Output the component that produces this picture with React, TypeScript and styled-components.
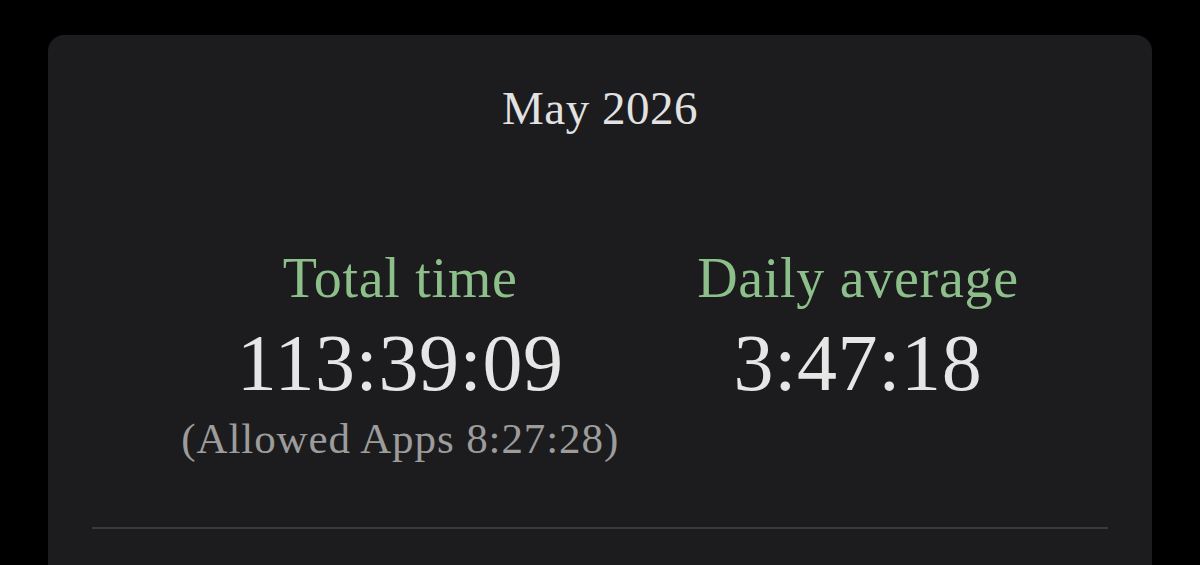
import React from "react";
import styled, { createGlobalStyle } from "styled-components";

const Global = createGlobalStyle`
  html, body { margin: 0; padding: 0; background: #000; }
  body { font-family: "Liberation Serif", "DejaVu Serif", serif; overflow: hidden; }
`;

const Page = styled.div`
  padding: 35px 48px 0;
`;

const Card = styled.section`
  background: #1c1c1e;
  border-radius: 16px;
  padding: 45px 44px 80px;
  display: flex;
  flex-direction: column;
  align-items: center;
`;

const Title = styled.div`
  font-size: 47px;
  line-height: 56px;
  letter-spacing: 0.5px;
  color: #e2e2e2;
`;

const Stats = styled.div`
  margin-top: 110px;
  display: flex;
  justify-content: center;
  gap: 78px;
`;

const Stat = styled.div`
  display: flex;
  flex-direction: column;
  align-items: center;
`;

const Label = styled.div`
  font-size: 56px;
  line-height: 64px;
  letter-spacing: 0.7px;
  color: #8cbf8a;
`;

const Value = styled.div`
  margin-top: 9px;
  font-size: 80px;
  line-height: 88px;
  letter-spacing: 0.6px;
  color: #e6e6e6;
`;

const Sub = styled.div`
  margin-top: 8px;
  font-size: 43px;
  line-height: 48px;
  letter-spacing: 0.9px;
  color: #9c9c9c;
`;

const Divider = styled.hr`
  align-self: stretch;
  margin: 64px 0 0;
  border: none;
  height: 2px;
  background: #3a3a3c;
`;

export default function App() {
  return (
    <Page>
      <Global />
      <Card>
        <Title>May 2026</Title>
        <Stats>
          <Stat>
            <Label>Total time</Label>
            <Value>113:39:09</Value>
            <Sub>(Allowed Apps 8:27:28)</Sub>
          </Stat>
          <Stat>
            <Label>Daily average</Label>
            <Value>3:47:18</Value>
          </Stat>
        </Stats>
        <Divider />
      </Card>
    </Page>
  );
}
